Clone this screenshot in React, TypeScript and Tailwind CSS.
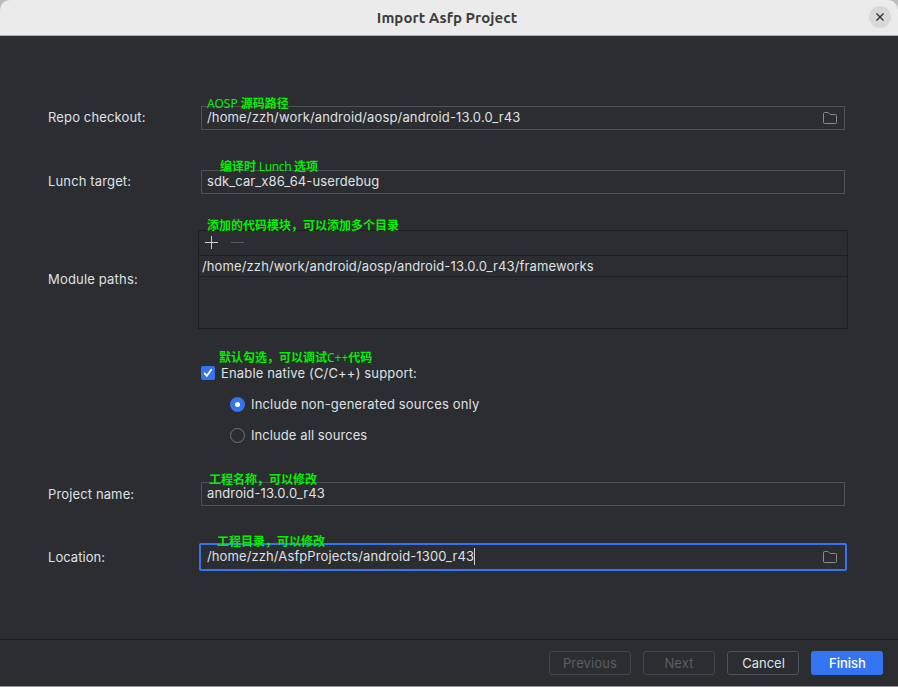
import React from "react";

function FolderIcon() {
  return (
    <svg width="16" height="16" viewBox="0 0 16 16" fill="none" stroke="#868a91" className="shrink-0">
      <path d="M1.5 3.5a1 1 0 0 1 1-1h3.3a1 1 0 0 1 .7.3L8.2 4.5h5.3a1 1 0 0 1 1 1v7a1 1 0 0 1-1 1h-11a1 1 0 0 1-1-1z" />
    </svg>
  );
}

function Note({ className, children }: { className: string; children: React.ReactNode }) {
  return (
    <span
      className={`absolute z-10 whitespace-nowrap font-['Noto_Sans','Noto_Sans_CJK_SC',sans-serif] text-[12px] leading-[16px] tracking-normal text-[#00f000] ${className}`}
    >
      {children}
    </span>
  );
}

function Label({ children }: { children: React.ReactNode }) {
  return <div className="-mt-0.5 w-[153px] shrink-0 pl-px tracking-[0.14px]">{children}</div>;
}

export default function App() {
  return (
    <div className="flex h-[687px] w-[898px] flex-col overflow-hidden border-b border-[#959595] bg-[#2b2d30] font-['Inter',sans-serif] text-[13px] leading-4 tracking-[0.13px] text-[#dfe1e5]">
      <header className="h-9 shrink-0 bg-[#bcbcbc]">
        <div className="relative flex h-full items-center justify-center rounded-t-[10px] border-b border-[#b0b0b0] bg-[#ebebeb] pr-1 font-['Ubuntu','Noto_Sans',sans-serif] text-[15px] font-bold tracking-[0.05px] text-[#3d3d3d]">
          <h1 className="whitespace-nowrap">Import Asfp Project</h1>
          <button className="absolute top-[6px] right-[7px] flex size-[22px] items-center justify-center rounded-full bg-[#d9d9d9]">
            <svg width="8" height="8" viewBox="0 0 8 8" stroke="#333" strokeWidth="1.4">
              <path d="M.5.5l7 7M7.5.5l-7 7" />
            </svg>
          </button>
        </div>
      </header>

      <main className="flex flex-1 flex-col pt-[70px] pl-[47px]">
        <div className="flex h-6 items-center">
          <Label>Repo checkout:</Label>
          <div className="relative ml-px flex h-6 w-[644px] items-center justify-between border border-[#4e5157] pr-[6px] pl-[5px]">
            <Note className="-top-[11px] left-[5px]">
              AOSP <b>源码路径</b>
            </Note>
            <span className="-mt-0.5 tracking-[0.14px]">/home/zzh/work/android/aosp/android-13.0.0_r43</span>
            <FolderIcon />
          </div>
        </div>

        <div className="mt-10 flex h-6 items-center">
          <Label>Lunch target:</Label>
          <div className="relative ml-px flex h-6 w-[644px] items-center border border-[#4e5157] pl-[5px]">
            <Note className="-top-[12px] left-[18px]">
              <b>编译时</b>
              <span className="tracking-[-0.35px]"> Lunch </span>
              <b>选项</b>
            </Note>
            <span className="-mt-0.5 tracking-[0.1px]">sdk_car_x86_64-userdebug</span>
          </div>
        </div>

        <div className="mt-9 flex h-[99px] items-center">
          <div className="-mt-0.5 w-[151px] shrink-0 pl-px tracking-[0.18px]">Module paths:</div>
          <div className="relative h-[99px] w-[650px] border border-[#1e1f22]">
            <Note className="-top-[13px] left-[8px]">
              <b>添加的代码模块，可以添加多个目录</b>
            </Note>
            <div className="flex h-6 items-center gap-[13px] pb-0.5 pl-[6px]">
              <svg width="13" height="13" viewBox="0 0 13 13" stroke="#ced0d6">
                <path d="M6.5 0v13M0 6.5h13" />
              </svg>
              <svg width="13" height="13" viewBox="0 0 13 13" stroke="#5a5d63">
                <path d="M0 6.5h13" />
              </svg>
            </div>
            <div className="flex h-[22px] items-center border-y border-[#1e1f22] pl-[3px] tracking-[0.125px]">
              /home/zzh/work/android/aosp/android-13.0.0_r43/frameworks
            </div>
          </div>
        </div>

        <div className="relative mt-[37px] ml-[154px] flex h-[14px] items-center gap-[6px]">
          <Note className="-top-[16px] left-[18px]">
            <b>默认勾选，可以调试</b>
            <span>C++</span>
            <b>代码</b>
          </Note>
          <span className="flex size-[14px] items-center justify-center rounded-[2px] bg-[#3574f0]">
            <svg width="10" height="10" viewBox="0 0 10 10" fill="none" stroke="#fff" strokeWidth="1.8" strokeLinecap="round">
              <path d="M1.6 5.4l2.2 2.4L8.3 1.8" />
            </svg>
          </span>
          <span className="tracking-[0.16px]">Enable native (C/C++) support:</span>
        </div>
        <div className="mt-[17px] ml-[183px] flex h-[15px] items-center gap-[6px]">
          <span className="flex size-[15px] items-center justify-center rounded-full bg-[#3574f0]">
            <span className="size-[5px] rounded-full bg-white" />
          </span>
          <span className="-mt-0.5 tracking-[0.17px]">Include non-generated sources only</span>
        </div>
        <div className="mt-4 ml-[183px] flex h-[15px] items-center gap-[6px]">
          <span className="size-[15px] rounded-full border border-[#6f737a]" />
          <span className="-mt-0.5 tracking-[0.08px]">Include all sources</span>
        </div>

        <div className="mt-[39px] flex h-6 items-center">
          <div className="w-[153px] shrink-0 pl-px">Project name:</div>
          <div className="relative ml-px flex h-6 w-[644px] items-center border border-[#4e5157] pl-[5px]">
            <Note className="-top-[11px] left-[7px]">
              <b>工程名称，可以修改</b>
            </Note>
            <span className="-mt-0.5">android-13.0.0_r43</span>
          </div>
        </div>

        <div className="mt-[37px] flex h-7 items-center">
          <div className="w-[152px] shrink-0 pl-px tracking-[0.05px]">Location:</div>
          <div className="relative flex h-7 w-[648px] items-center justify-between rounded-[2px] border-2 border-[#3574f0] pr-[7px] pl-[6px]">
            <Note className="-top-[11px] left-[16px]">
              <b>工程目录，可以修改</b>
            </Note>
            <span className="-mt-0.5 flex items-center tracking-[0.11px]">
              /home/zzh/AsfpProjects/android-1300_r43
              <span className="h-[17px] w-px bg-[#ced0d6]" />
            </span>
            <FolderIcon />
          </div>
        </div>
      </main>

      <footer className="flex h-[47px] shrink-0 items-start justify-end gap-3 border-t border-[#1e1f22] pt-[11px] pr-[15px]">
        <button className="h-6 w-[82px] rounded-[3px] border border-[#43454a] text-[#5a5d63]">Previous</button>
        <button className="h-6 w-[72px] rounded-[3px] border border-[#43454a] text-[#5a5d63]">Next</button>
        <button className="h-6 w-[72px] rounded-[3px] border border-[#4e5157] pl-px tracking-normal">Cancel</button>
        <button className="h-6 w-[72px] rounded-[3px] bg-[#3574f0] pl-px font-medium tracking-normal text-white">Finish</button>
      </footer>
    </div>
  );
}
